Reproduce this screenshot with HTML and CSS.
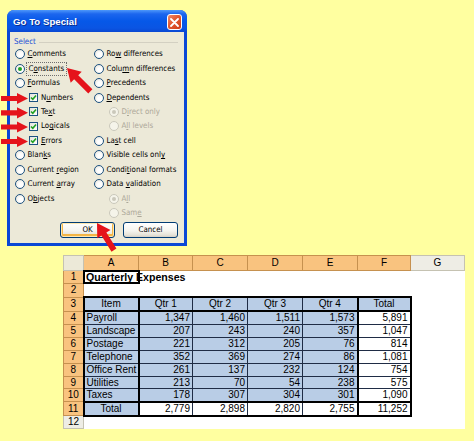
FILE: index.html
```html
<!DOCTYPE html>
<html>
<head>
<meta charset="utf-8">
<link rel="stylesheet" href="styles.css">
</head>
<body>
<div class="dialog">
  <div class="titlebar">
    <span class="title">Go To Special</span>
    <span class="close"><svg width="9" height="9" viewBox="0 0 9 9"><path d="M1 1L8 8M8 1L1 8" stroke="#fff" stroke-width="1.8" stroke-linecap="round"/></svg></span>
  </div>
  <div class="body">
    <div class="group-label">Select</div>
    <div class="options">
      <div class="opt"><span class="radio"></span><span><u>C</u>omments</span></div>
      <div class="opt"><span class="radio on"></span><span class="focus">C<u>o</u>nstants</span></div>
      <div class="opt"><span class="radio"></span><span><u>F</u>ormulas</span></div>
      <div class="opt sub"><span class="check"><svg width="7" height="7" viewBox="0 0 7 7"><path d="M1 3.5L2.8 5.3L6 1.5" fill="none" stroke="#21A121" stroke-width="1.6"/></svg></span><span>N<u>u</u>mbers</span></div>
      <div class="opt sub"><span class="check"><svg width="7" height="7" viewBox="0 0 7 7"><path d="M1 3.5L2.8 5.3L6 1.5" fill="none" stroke="#21A121" stroke-width="1.6"/></svg></span><span>Te<u>x</u>t</span></div>
      <div class="opt sub"><span class="check"><svg width="7" height="7" viewBox="0 0 7 7"><path d="M1 3.5L2.8 5.3L6 1.5" fill="none" stroke="#21A121" stroke-width="1.6"/></svg></span><span>Lo<u>g</u>icals</span></div>
      <div class="opt sub"><span class="check"><svg width="7" height="7" viewBox="0 0 7 7"><path d="M1 3.5L2.8 5.3L6 1.5" fill="none" stroke="#21A121" stroke-width="1.6"/></svg></span><span><u>E</u>rrors</span></div>
      <div class="opt"><span class="radio"></span><span>Blan<u>k</u>s</span></div>
      <div class="opt"><span class="radio"></span><span>Current <u>r</u>egion</span></div>
      <div class="opt"><span class="radio"></span><span>Current <u>a</u>rray</span></div>
      <div class="opt"><span class="radio"></span><span>O<u>b</u>jects</span></div>
      <div class="opt"></div>

      <div class="opt"><span class="radio"></span><span>Ro<u>w</u> differences</span></div>
      <div class="opt"><span class="radio"></span><span>Colu<u>m</u>n differences</span></div>
      <div class="opt"><span class="radio"></span><span><u>P</u>recedents</span></div>
      <div class="opt"><span class="radio"></span><span><u>D</u>ependents</span></div>
      <div class="opt sub dis"><span class="radio on"></span><span>D<u>i</u>rect only</span></div>
      <div class="opt sub dis"><span class="radio"></span><span>A<u>l</u>l levels</span></div>
      <div class="opt"><span class="radio"></span><span>La<u>s</u>t cell</span></div>
      <div class="opt"><span class="radio"></span><span>Visible cells onl<u>y</u></span></div>
      <div class="opt"><span class="radio"></span><span>Condi<u>t</u>ional formats</span></div>
      <div class="opt"><span class="radio"></span><span>Data <u>v</u>alidation</span></div>
      <div class="opt sub dis"><span class="radio on"></span><span>A<u>l</u>l</span></div>
      <div class="opt sub dis"><span class="radio"></span><span>Sam<u>e</u></span></div>
    </div>
    <div class="buttons">
      <span class="btn default">OK</span>
      <span class="btn">Cancel</span>
    </div>
  </div>
</div>

<table class="sheet">
  <colgroup>
    <col class="w-rh"><col class="w55"><col class="w54"><col class="w55"><col class="w55"><col class="w55"><col class="w53"><col class="w54">
  </colgroup>
  <tr class="hrow">
    <th class="corner"></th><th class="ch">A</th><th class="ch">B</th><th class="ch">C</th><th class="ch">D</th><th class="ch">E</th><th class="ch">F</th><th class="ch g">G</th>
  </tr>
  <tr class="h13">
    <th class="rh">1</th><td class="active"><span class="ttl">Quarterly Expenses</span></td><td></td><td></td><td></td><td></td><td></td><td></td>
  </tr>
  <tr class="h14">
    <th class="rh">2</th><td></td><td></td><td></td><td></td><td></td><td></td><td></td>
  </tr>
  <tr class="h14">
    <th class="rh">3</th>
    <td class="t b c bl br bt bb">Item</td><td class="t b c bt bb">Qtr 1</td><td class="t b c bt bb">Qtr 2</td><td class="t b c bt bb">Qtr 3</td><td class="t b c bt bb br">Qtr 4</td><td class="t b c bt bb br">Total</td><td></td>
  </tr>
  <tr class="h13">
    <th class="rh">4</th>
    <td class="t b bl br">Payroll</td><td class="t b n">1,347</td><td class="t b n">1,460</td><td class="t b n">1,511</td><td class="t b n br">1,573</td><td class="t w n br">5,891</td><td></td>
  </tr>
  <tr class="h13">
    <th class="rh">5</th>
    <td class="t b bl br">Landscape</td><td class="t b n">207</td><td class="t b n">243</td><td class="t b n">240</td><td class="t b n br">357</td><td class="t w n br">1,047</td><td></td>
  </tr>
  <tr class="h13">
    <th class="rh">6</th>
    <td class="t b bl br">Postage</td><td class="t b n">221</td><td class="t b n">312</td><td class="t b n">205</td><td class="t b n br">76</td><td class="t w n br">814</td><td></td>
  </tr>
  <tr class="h13">
    <th class="rh">7</th>
    <td class="t b bl br">Telephone</td><td class="t b n">352</td><td class="t b n">369</td><td class="t b n">274</td><td class="t b n br">86</td><td class="t w n br">1,081</td><td></td>
  </tr>
  <tr class="h13">
    <th class="rh">8</th>
    <td class="t b bl br">Office Rent</td><td class="t b n">261</td><td class="t b n">137</td><td class="t b n">232</td><td class="t b n br">124</td><td class="t w n br">754</td><td></td>
  </tr>
  <tr class="h12">
    <th class="rh">9</th>
    <td class="t b bl br">Utilities</td><td class="t b n">213</td><td class="t b n">70</td><td class="t b n">54</td><td class="t b n br">238</td><td class="t w n br">575</td><td></td>
  </tr>
  <tr class="h13">
    <th class="rh">10</th>
    <td class="t b bl br bb">Taxes</td><td class="t b n bb">178</td><td class="t b n bb">307</td><td class="t b n bb">304</td><td class="t b n br bb">301</td><td class="t w n br bb">1,090</td><td></td>
  </tr>
  <tr class="h14">
    <th class="rh">11</th>
    <td class="t b c bl br bb">Total</td><td class="t w n bb">2,779</td><td class="t w n bb">2,898</td><td class="t w n bb">2,820</td><td class="t w n br bb">2,755</td><td class="t w n br bb">11,252</td><td></td>
  </tr>
  <tr class="h13">
    <th class="rh g">12</th><td></td><td></td><td></td><td></td><td></td><td></td><td></td>
  </tr>
</table>

<svg class="arrows" width="474" height="441" viewBox="0 0 474 441">
  <g fill="#E5131B">
    <polygon transform="translate(0,98.5)" points="1,-2.6 17,-2.6 17,-5.6 28,0 17,5.6 17,2.6 1,2.6"/>
    <polygon transform="translate(0,112.8)" points="1,-2.6 17,-2.6 17,-5.6 28,0 17,5.6 17,2.6 1,2.6"/>
    <polygon transform="translate(0,127)" points="1,-2.6 17,-2.6 17,-5.6 28,0 17,5.6 17,2.6 1,2.6"/>
    <polygon transform="translate(0,141.5)" points="1,-2.6 17,-2.6 17,-5.6 28,0 17,5.6 17,2.6 1,2.6"/>
    <polygon transform="translate(67,68) rotate(225)" points="-33,-2.9 -13,-2.9 -13,-7.8 0,0 -13,7.8 -13,2.9 -33,2.9"/>
    <polygon transform="translate(97,223) rotate(238)" points="-32,-2.9 -13,-2.9 -13,-7.8 0,0 -13,7.8 -13,2.9 -32,2.9"/>
  </g>
</svg>
</body>
</html>
```

FILE: styles.css
```css
html, body {
  margin: 0;
  padding: 0;
}
body {
  background: #FFFFA0;
  font-family: "Liberation Sans", Arial, sans-serif;
  width: 474px;
  height: 441px;
  position: relative;
  overflow: hidden;
}

/* ---------- dialog ---------- */
.dialog {
  width: 180px;
  box-sizing: border-box;
  margin: 10px 0 0 7px;
  padding: 0 3px 3px;
  background: #0A48D6;
  border-radius: 7px 7px 0 0;
}
.titlebar {
  height: 22px;
  margin: 0 -3px;
  padding: 0 5px 0 6px;
  border-radius: 7px 7px 0 0;
  background: linear-gradient(#4E98FA 0%, #1C66EE 18%, #0658E8 50%, #0A55E3 82%, #0A47D2 100%);
  display: flex;
  align-items: center;
  justify-content: space-between;
}
.title {
  color: #fff;
  font-weight: bold;
  font-size: 9.6px;
  letter-spacing: 0.05px;
  text-shadow: 1px 1px 0 #0A2C90;
}
.close {
  width: 15px;
  height: 16px;
  box-sizing: border-box;
  margin-top: 2px;
  border: 1px solid #fff;
  border-radius: 3px;
  background: linear-gradient(135deg, #F08A6A 0%, #E2582F 45%, #CF3B18 100%);
  display: flex;
  align-items: center;
  justify-content: center;
}
.body {
  background: #ECE9D8;
  padding: 5px 6px 5px 5px;
  font-family: "DejaVu Sans Condensed", "Liberation Sans", sans-serif;
  font-size: 7.9px;
}
.group-label {
  height: 10px;
  line-height: 10px;
  color: #1B4FD6;
  margin-left: -1px;
  display: flex;
  align-items: center;
}
.group-label::after {
  content: "";
  flex: 1;
  height: 1px;
  background: #D3D0C2;
  margin-left: 3px;
}
.options {
  display: grid;
  grid-auto-flow: column;
  grid-template-columns: 79px 1fr;
  grid-template-rows: repeat(12, 14.45px);
}
.opt {
  display: flex;
  align-items: center;
  white-space: nowrap;
  line-height: 10px;
  color: #000;
}
.opt.sub {
  padding-left: 14px;
}
.opt.dis {
  padding-left: 15px;
  color: #ACA899;
}
.radio {
  width: 10px;
  height: 10px;
  box-sizing: border-box;
  border: 1px solid #1D5281;
  border-radius: 50%;
  background: radial-gradient(circle at 60% 60%, #FFFFFF 30%, #E6E3D9 90%);
  margin-right: 2.5px;
  flex: none;
  display: flex;
  align-items: center;
  justify-content: center;
}
.radio.on::after {
  content: "";
  width: 4px;
  height: 4px;
  border-radius: 50%;
  background: #21A121;
}
.dis .radio {
  border-color: #CAC8BB;
  background: #F5F4EA;
}
.dis .radio.on::after {
  background: #CAC8BB;
}
.check {
  width: 9px;
  height: 9px;
  box-sizing: border-box;
  border: 1px solid #1D5281;
  background: linear-gradient(135deg, #E4E3DC, #FFFFFF);
  margin-right: 3px;
  flex: none;
  display: flex;
  align-items: center;
  justify-content: center;
}
.focus {
  outline: 1px dotted #6E6E6E;
  outline-offset: 1px;
  padding: 0 1px;
}
.buttons {
  display: flex;
  justify-content: flex-end;
  gap: 8px;
  margin-top: 1.6px;
}
.btn {
  width: 55px;
  height: 16px;
  box-sizing: border-box;
  border: 1px solid #003C74;
  border-radius: 3px;
  background: linear-gradient(#FFFFFF 0%, #F5F4EF 55%, #E6E3D8 85%, #D6D0C5 100%);
  display: flex;
  align-items: center;
  justify-content: center;
  font-size: 7.9px;
  color: #000;
}
.btn.default {
  box-shadow: inset 0 0 0 1px #FFE8B0, inset 0 -1px 0 2px #F3B545;
}

/* ---------- spreadsheet ---------- */
.sheet {
  margin: 9px 0 0 63px;
  border-collapse: collapse;
  table-layout: fixed;
  width: 401px;
  background: #fff;
  font-size: 10px;
  line-height: 10px;
}
.w-rh { width: 20px; }
.w55 { width: 55px; }
.w54 { width: 54px; }
.w53 { width: 53px; }
.sheet th, .sheet td {
  padding: 0 2px;
  white-space: nowrap;
  overflow: hidden;
  font-weight: normal;
}
.hrow { height: 15px; }
.h12 { height: 12.5px; }
.h13 { height: 13px; }
.h14 { height: 14px; }
.corner {
  background: #ECE9D8;
  border: 1px solid #C5C2B2;
}
.ch {
  background: #F9C37F;
  border: 1px solid #C6914F;
  text-align: center;
  color: #000;
}
.ch.g {
  background: #EEEDE5;
  border-color: #C5C2B2;
}
.rh {
  background: #F9C37F;
  border: 1px solid #C6914F;
  text-align: center;
  color: #000;
  padding: 0;
}
.rh.g {
  background: #EEEDE5;
  border-color: #C5C2B2;
}
.sheet td.active {
  position: relative;
  overflow: visible;
  padding-left: 2px;
}
.sheet td.active::after {
  content: "";
  position: absolute;
  left: -1px;
  top: -1px;
  right: -1px;
  bottom: -1px;
  border: 2px solid #000;
}
.ttl {
  font-weight: bold;
  font-size: 10.6px;
  position: relative;
}
.t {
  border: 1px solid #1F2C45;
}
.t.b { background: #B9CDE6; }
.t.w { background: #FFFFFF; }
.c { text-align: center; }
.n { text-align: right; padding-right: 1px; }
.bl { border-left: 2px solid #000; }
.br { border-right: 2px solid #000; }
.bt { border-top: 2px solid #000; }
.bb { border-bottom: 2px solid #000; }

/* ---------- callout arrows ---------- */
.arrows {
  position: absolute;
  left: 0;
  top: 0;
  pointer-events: none;
}
```
